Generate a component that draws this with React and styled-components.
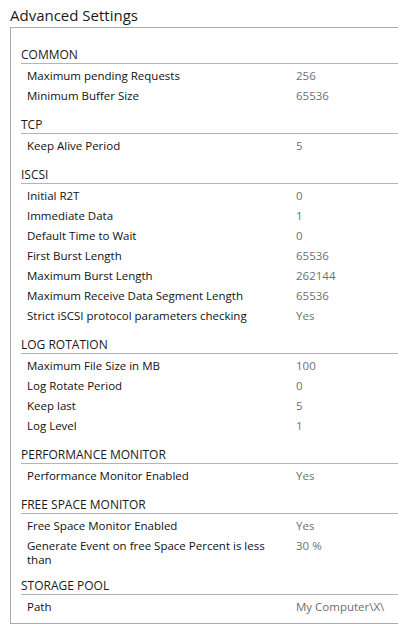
import React from 'react';
import styled, { createGlobalStyle } from 'styled-components';

const GlobalStyle = createGlobalStyle`
	html, body {
		margin: 0;
		padding: 0;
		background: #ffffff;
		overflow: hidden;
	}
	body {
		font-family: "Open Sans", "Noto Sans", sans-serif;
		color: #000000;
	}
`;

const Page = styled.div`
	width: 398px;
	height: 630px;
	box-sizing: border-box;
	padding: 4px 0 0 10px;
`;

const Title = styled.h1`
	margin: 0;
	height: 23px;
	font-weight: 400;
	font-size: 15px;
	line-height: 23px;
	color: #1a1a1a;
`;

const Panel = styled.div`
	box-sizing: border-box;
	width: 400px;
	border: 1px solid #ababab;
	border-right: none;
	padding: 8px 0 6px;
`;

const Section = styled.section`
	display: flex;
	flex-direction: column;
`;

const Header = styled.div`
	margin: 0 0 2px 10px;
	padding-top: 11px;
	border-bottom: 1px solid #b4b4b4;
	font-size: 12px;
	line-height: 16px;
	color: #1a1a1a;
`;

const Row = styled.div`
	display: grid;
	grid-template-columns: 269px 1fr;
	box-sizing: border-box;
	min-height: 20px;
	padding: 3px 0 0 16px;
	font-size: 11.5px;
	line-height: 14px;
`;

const Label = styled.div`
	padding-right: 12px;
	color: #111111;
`;

const Value = styled.div`
	color: #6f6f6f;
	white-space: nowrap;
`;

const sections = [
	{ title: 'COMMON', rows: [
		[ 'Maximum pending Requests', '256' ],
		[ 'Minimum Buffer Size', '65536' ],
	] },
	{ title: 'TCP', rows: [
		[ 'Keep Alive Period', '5' ],
	] },
	{ title: 'ISCSI', rows: [
		[ 'Initial R2T', '0' ],
		[ 'Immediate Data', '1' ],
		[ 'Default Time to Wait', '0' ],
		[ 'First Burst Length', '65536' ],
		[ 'Maximum Burst Length', '262144' ],
		[ 'Maximum Receive Data Segment Length', '65536' ],
		[ 'Strict iSCSI protocol parameters checking', 'Yes' ],
	] },
	{ title: 'LOG ROTATION', rows: [
		[ 'Maximum File Size in MB', '100' ],
		[ 'Log Rotate Period', '0' ],
		[ 'Keep last', '5' ],
		[ 'Log Level', '1' ],
	] },
	{ title: 'PERFORMANCE MONITOR', rows: [
		[ 'Performance Monitor Enabled', 'Yes' ],
	] },
	{ title: 'FREE SPACE MONITOR', rows: [
		[ 'Free Space Monitor Enabled', 'Yes' ],
		[ 'Generate Event on free Space Percent is less than', '30 %' ],
	] },
	{ title: 'STORAGE POOL', rows: [
		[ 'Path', 'My Computer\\X\\' ],
	] },
];

export default function App() {
	return (
		<Page>
			<GlobalStyle />
			<Title>Advanced Settings</Title>
			<Panel>
				{ sections.map( section => (
					<Section key={ section.title }>
						<Header>{ section.title }</Header>
						{ section.rows.map( ( [ label, value ] ) => (
							<Row key={ label }>
								<Label>{ label }</Label>
								<Value>{ value }</Value>
							</Row>
						) ) }
					</Section>
				) ) }
			</Panel>
		</Page>
	);
}
